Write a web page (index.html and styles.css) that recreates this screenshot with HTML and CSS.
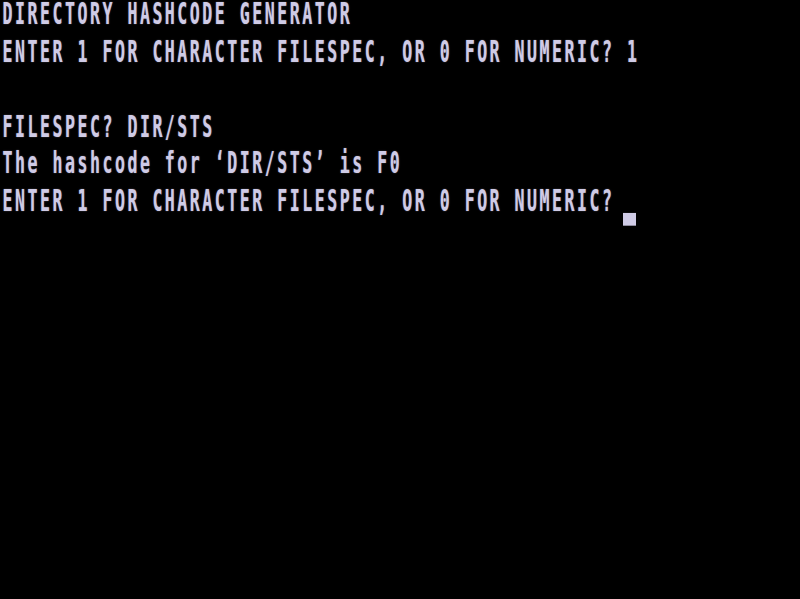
FILE: index.html
```
<!DOCTYPE html>
<html>
<head>
<meta charset="utf-8">
<link rel="stylesheet" href="styles.css">
</head>
<body>
<div class="screen">
<div class="line">DIRECTORY HASHCODE GENERATOR</div>
<div class="line">ENTER 1 FOR CHARACTER FILESPEC, OR 0 FOR NUMERIC? 1</div>
<div class="line"> </div>
<div class="line">FILESPEC? DIR/STS</div>
<div class="line">The hashcode for ‘DIR/STS’ is F0</div>
<div class="line">ENTER 1 FOR CHARACTER FILESPEC, OR 0 FOR NUMERIC? <span class="cursor"></span></div>
</div>
</body>
</html>
```
FILE: styles.css
```
html, body {
  margin: 0;
  padding: 0;
  background: #000;
  width: 800px;
  height: 599px;
  overflow: hidden;
}
.screen {
  padding-left: 2.5px;
  font-family: "DejaVu Sans Mono", monospace;
  font-weight: bold;
  font-size: 16.6px;
  letter-spacing: 2.5px;
  line-height: 16px;
  color: #cfcbe6;
  transform: scaleY(1.82);
  transform-origin: 0 0;
  text-shadow: 0 0 1px rgba(207, 203, 230, 0.5);
}
.line {
  height: 20.55px;
  white-space: pre;
}
.cursor {
  display: inline-block;
  width: 13px;
  height: 7.1px;
  vertical-align: -8.2px;
  background: #cfcbe6;
  margin-left: -4.5px;
}
```
